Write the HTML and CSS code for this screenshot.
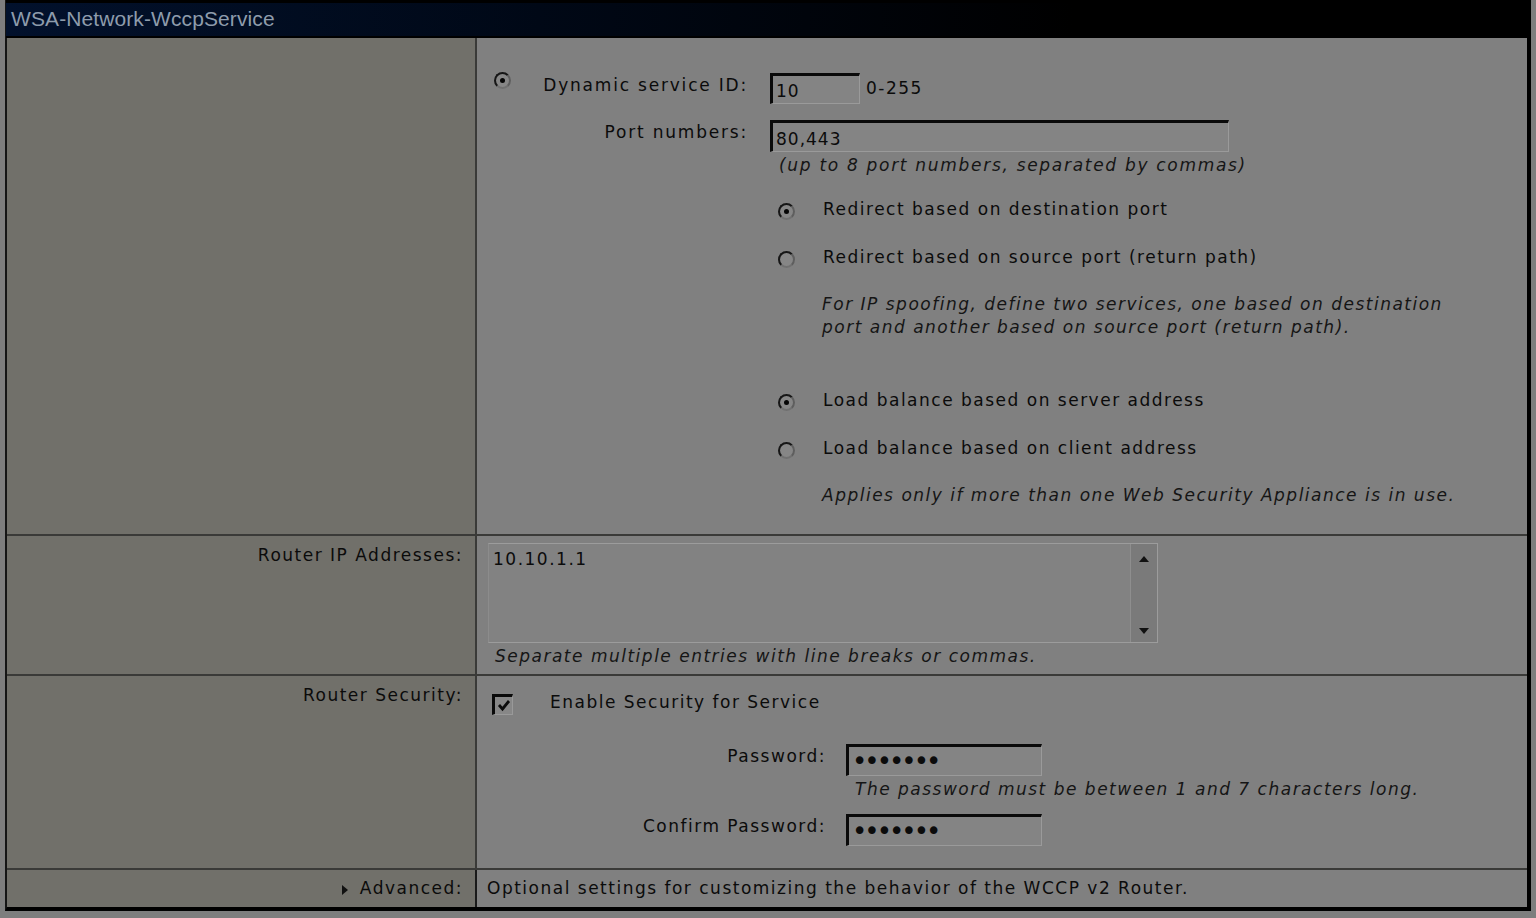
FILE: index.html
```html
<!DOCTYPE html>
<html lang="en">
<head>
    <meta charset="UTF-8">
    <title>WSA-Network-WccpService</title>
    <link rel="stylesheet" href="styles.css">
</head>
<body>
    <div class="janela">
        <div class="titulo">WSA-Network-WccpService</div>

        <div class="linha linha-servico">
            <div class="rotulo"></div>
            <div class="campo">
                <div class="servico">
                    <span class="radio marcado"></span>
                    <span class="rot-servico">Dynamic service ID:</span>
                    <div class="com-sufixo">
                        <input class="caixa caixa-id" type="text" value="10">
                        <span>0-255</span>
                    </div>

                    <span></span>
                    <span class="rot-servico rot-portas">Port numbers:</span>
                    <input class="caixa caixa-portas" type="text" value="80,443">

                    <span></span>
                    <span></span>
                    <div class="dica dica-portas">(up to 8 port numbers, separated by commas)</div>
                </div>

                <div class="opcoes">
                    <div class="opcao op1"><span class="radio marcado"></span>Redirect based on destination port</div>
                    <div class="opcao op2"><span class="radio"></span>Redirect based on source port (return path)</div>
                    <div class="dica nota nota1">For IP spoofing, define two services, one based on destination<br>port and another based on source port (return path).</div>
                    <div class="opcao op3"><span class="radio marcado"></span>Load balance based on server address</div>
                    <div class="opcao op4"><span class="radio"></span>Load balance based on client address</div>
                    <div class="dica nota nota2">Applies only if more than one Web Security Appliance is in use.</div>
                </div>
            </div>
        </div>

        <div class="linha linha-roteador">
            <div class="rotulo">Router IP Addresses:</div>
            <div class="campo">
                <div class="area">
                    <div class="area-texto">10.10.1.1</div>
                    <div class="rolagem">
                        <span class="seta seta-cima"></span>
                        <span class="seta seta-baixo"></span>
                    </div>
                </div>
                <div class="dica dica-area">Separate multiple entries with line breaks or commas.</div>
            </div>
        </div>

        <div class="linha linha-seguranca">
            <div class="rotulo">Router Security:</div>
            <div class="campo">
                <div class="habilitar">
                    <span class="check">
                        <svg width="14" height="13" viewBox="0 0 14 13"><path d="M2 6 L5.5 10 L12 2" fill="none" stroke="#0c0c0c" stroke-width="2.8"/></svg>
                    </span>
                    Enable Security for Service
                </div>
                <div class="senhas">
                    <span class="rot-senha">Password:</span>
                    <input class="caixa caixa-senha" type="password" value="1234567">
                    <span></span>
                    <div class="dica dica-senha">The password must be between 1 and 7 characters long.</div>
                    <span class="rot-senha rot-confirma">Confirm Password:</span>
                    <input class="caixa caixa-senha caixa-confirma" type="password" value="1234567">
                </div>
            </div>
        </div>

        <div class="linha linha-avancado">
            <div class="rotulo"><span class="triangulo"></span>Advanced:</div>
            <div class="campo">Optional settings for customizing the behavior of the WCCP v2 Router.</div>
        </div>
    </div>
</body>
</html>
```

FILE: styles.css
```css
body {
    margin: 0;
    background-color: #7e7e7e;
    font-family: "DejaVu Sans", Verdana, sans-serif;
    font-size: 17px;
    color: #0b0b0b;
}

.janela {
    margin-left: 5px;
    width: 1526px;
    box-sizing: border-box;
    border-left: 2px solid #151515;
    border-right: 4px solid #000;
    border-bottom: 4px solid #000;
}

.titulo {
    height: 33px;
    margin-left: -1px;
    margin-right: -4px;
    border-top: 3px solid #000;
    border-bottom: 2px solid #000;
    padding-left: 5px;
    background: linear-gradient(to right, #02112c, #000816 35%, #000 70%);
    color: #8e9cac;
    font-family: "Liberation Sans", Arial, sans-serif;
    font-size: 21px;
    letter-spacing: 0.1px;
    line-height: 31px;
}

.linha {
    display: grid;
    grid-template-columns: 470px 1fr;
    border-bottom: 2px solid #3a3a38;
    line-height: 23px;
    letter-spacing: 1.5px;
}

.linha:last-child {
    border-bottom: none;
}

.rotulo {
    background-color: #71706a;
    border-right: 2px solid #3a3a38;
    text-align: right;
    padding-right: 12px;
    white-space: nowrap;
}

.campo {
    background-color: #808080;
}

.dica {
    font-style: italic;
    color: #151515;
}

/* radios e caixas */
.radio {
    display: inline-block;
    width: 17px;
    height: 17px;
    border-radius: 50%;
    border: 2.5px solid #161616;
    border-right-color: #5e5e5e;
    border-bottom-color: #707070;
    background-color: #868686;
    box-sizing: border-box;
    position: relative;
}

.radio.marcado::after {
    content: "";
    position: absolute;
    left: 3.5px;
    top: 3.5px;
    width: 5px;
    height: 5px;
    border-radius: 50%;
    background-color: #050505;
}

.caixa {
    box-sizing: border-box;
    height: 32px;
    margin: 0;
    padding: 3px 3px 0;
    border-style: solid;
    border-width: 3px 1px 1px 3px;
    border-color: #0a0a0a #9a9a9a #9a9a9a #0a0a0a;
    background-color: #848484;
    font-family: "DejaVu Sans", Verdana, sans-serif;
    font-size: 17px;
    letter-spacing: 1px;
    color: #0b0b0b;
    outline: none;
}

/* linha 1 */
.linha-servico {
    height: 496px;
}

.servico {
    display: grid;
    grid-template-columns: 40px 236px auto;
    padding: 35px 0 0 17px;
    align-items: start;
}

.servico .radio {
    margin-top: -1px;
}

.rot-servico {
    text-align: right;
    padding-right: 22px;
    margin-top: 1px;
    white-space: nowrap;
    letter-spacing: 1.8px;
}

.rot-portas {
    margin-top: 17px;
}

.com-sufixo {
    display: flex;
    align-items: center;
    gap: 6px;
}

.caixa-id {
    width: 90px;
    height: 31px;
}

.caixa-portas {
    width: 459px;
    margin-top: 16px;
}

.dica-portas {
    margin-top: 2px;
    padding-left: 9px;
    letter-spacing: 1.7px;
}

.opcoes {
    padding-left: 301px;
}

.opcao {
    display: flex;
    align-items: center;
}

.opcao .radio {
    margin-right: 28px;
    margin-top: 4px;
}

.op1 { margin-top: 21px; }
.op2 { margin-top: 25px; }
.op3 { margin-top: 50px; }
.op4 { margin-top: 25px; }

.nota {
    margin-top: 24px;
    padding-left: 44px;
}

/* linha 2 */
.linha-roteador {
    height: 138px;
}

.linha-roteador .rotulo {
    padding-top: 8px;
}

.linha-roteador .campo {
    padding: 7px 0 0 11px;
}

.area {
    display: flex;
    width: 670px;
    height: 100px;
    box-sizing: border-box;
    border: 1px solid #9c9c9c;
    border-left-color: #8c8c8c;
    background-color: #828282;
}

.area-texto {
    flex: 1;
    padding: 4px 4px;
}

.rolagem {
    width: 27px;
    background-color: #7a7a7a;
    border-left: 1px solid #8e8e8e;
    display: flex;
    flex-direction: column;
    justify-content: space-between;
    align-items: center;
    padding: 12px 0 8px;
    box-sizing: border-box;
}

.seta {
    width: 0;
    height: 0;
    border-left: 5px solid transparent;
    border-right: 5px solid transparent;
}

.seta-cima {
    border-bottom: 6px solid #111;
}

.seta-baixo {
    border-top: 6px solid #111;
}

.dica-area {
    padding-left: 7px;
    margin-top: 2px;
}

/* linha 3 */
.linha-seguranca {
    height: 192px;
}

.linha-seguranca .rotulo {
    padding-top: 8px;
}

.habilitar {
    display: flex;
    align-items: flex-start;
    padding: 15px 0 0 15px;
}

.check {
    display: inline-flex;
    align-items: center;
    justify-content: center;
    width: 21px;
    height: 21px;
    box-sizing: border-box;
    border-style: solid;
    border-width: 3px 1px 1px 3px;
    border-color: #0a0a0a #999 #999 #0a0a0a;
    background-color: #878787;
    margin-right: 37px;
    margin-top: 3px;
}

.senhas {
    display: grid;
    grid-template-columns: 369px auto;
    align-items: center;
    margin-top: 29px;
}

.rot-senha {
    text-align: right;
    padding-right: 20px;
    margin-top: -8px;
}

.caixa-senha {
    width: 196px;
    font-size: 26px;
    letter-spacing: -3px;
    padding: 0 3px;
}

.dica-senha {
    padding-left: 9px;
    margin-top: 2px;
}

.caixa-confirma {
    margin-top: 13px;
}

.rot-confirma {
    margin-top: 6px;
}

/* linha 4 */
.linha-avancado {
    height: 37px;
}

.linha-avancado .rotulo,
.linha-avancado .campo {
    line-height: 37px;
}

.linha-avancado .rotulo {
    border-right-color: #1a1a1a;
}

.linha-avancado .campo {
    padding-left: 10px;
}

.triangulo {
    display: inline-block;
    width: 0;
    height: 0;
    border-top: 5px solid transparent;
    border-bottom: 5px solid transparent;
    border-left: 6px solid #111;
    margin-right: 12px;
    vertical-align: -1px;
}
```
